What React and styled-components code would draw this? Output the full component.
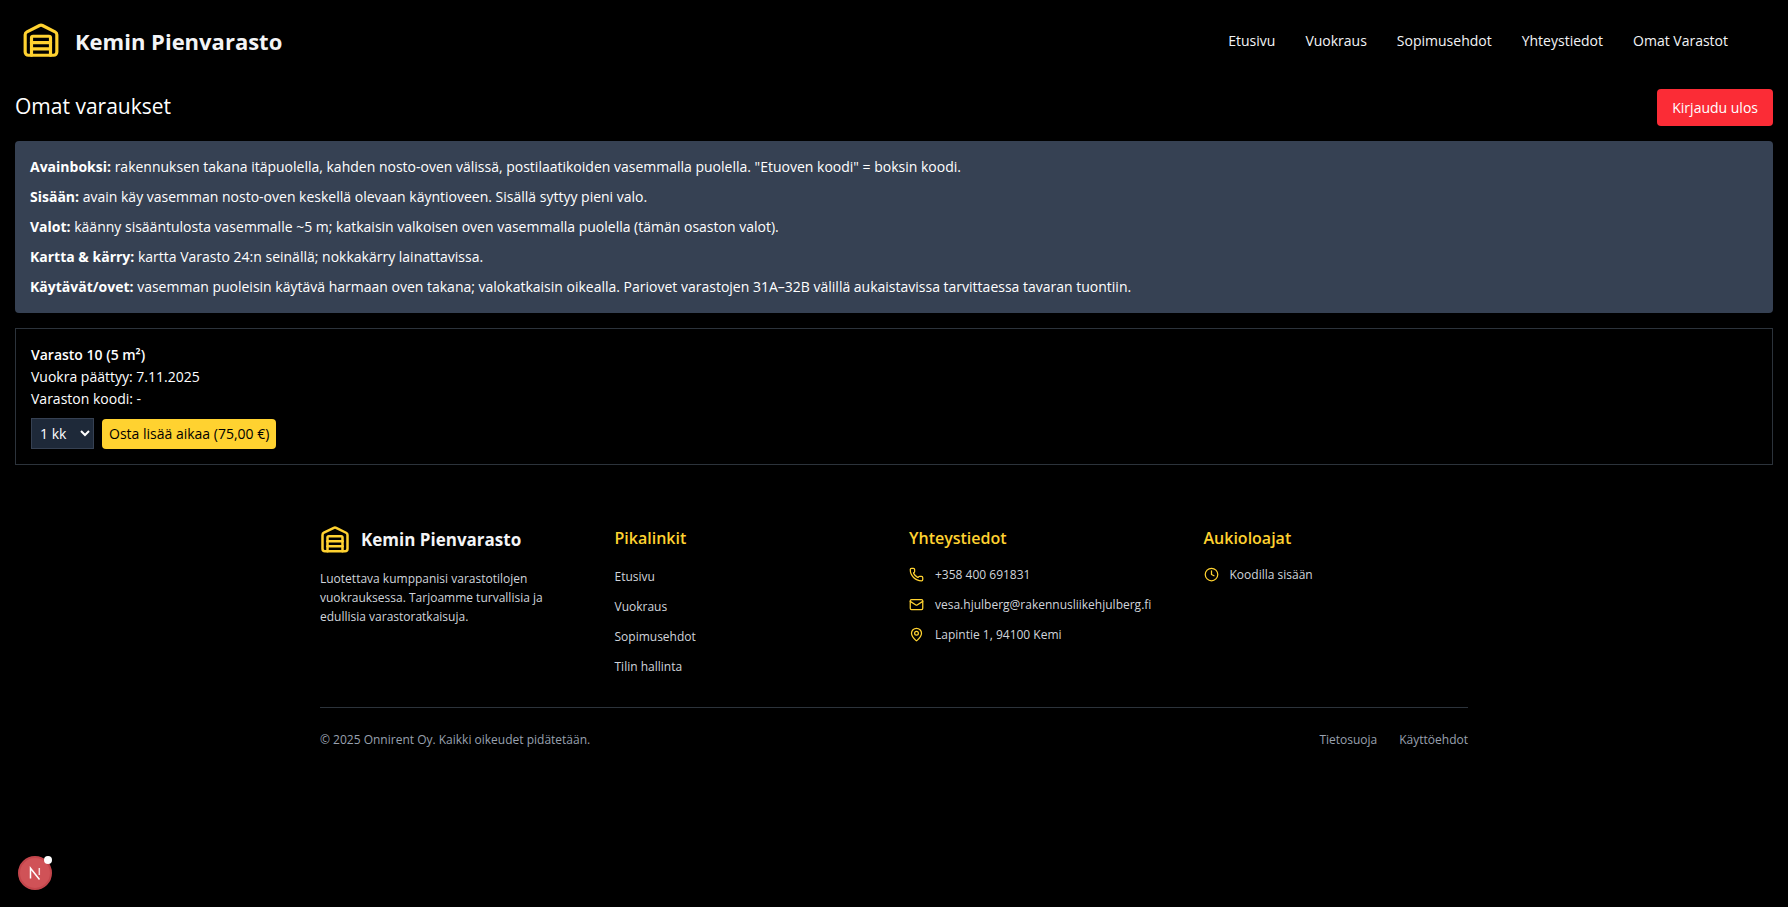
import React from "react";
import styled, { createGlobalStyle, ThemeProvider } from "styled-components";
import { Warehouse, Phone, Mail, MapPin, Clock } from "lucide-react";

const theme = {
  yellow: "#ffd230",
  red: "#fb2c36",
  panel: "#364153",
  field: "#1e2939",
  line: "#2c333b",
  textMuted: "#d1d5dc",
  textDim: "#99a1af",
};

const GlobalStyle = createGlobalStyle`
  *, *::before, *::after { box-sizing: border-box; }
  body {
    margin: 0;
    background: #000;
    color: #fff;
    font-family: "Open Sans", "Noto Sans", sans-serif;
    font-size: 14px;
    line-height: 22px;
  }
  h1, h2, h3, p, ul { margin: 0; padding: 0; }
  ul { list-style: none; }
  a { color: inherit; text-decoration: none; }
  button, select { font: inherit; }
`;

const Page = styled.div`
  min-height: 100vh;
`;

const Header = styled.header`
  display: flex;
  align-items: center;
  justify-content: space-between;
  height: 82px;
  padding: 0 60px 0 22px;
`;

const Brand = styled.a`
  display: flex;
  align-items: center;
  gap: ${(p) => (p.$small ? 11 : 15)}px;
  font-size: ${(p) => (p.$small ? 17 : 22)}px;
  line-height: 30px;
  font-weight: 700;
  color: #f3f4f6;
  white-space: nowrap;

  svg { color: ${(p) => p.theme.yellow}; flex: none; }
`;

const Nav = styled.nav`
  display: flex;
  gap: 30px;
`;

const NavLink = styled.a`
  color: #f3f4f6;
  white-space: nowrap;
`;

const Main = styled.main`
  display: flex;
  flex-direction: column;
  gap: 15px;
  padding: 7px 15px 0;
`;

const TitleRow = styled.div`
  display: flex;
  align-items: flex-start;
  justify-content: space-between;
`;

const Title = styled.h1`
  font-size: 21px;
  line-height: 34px;
  font-weight: 400;
`;

const LogoutButton = styled.button`
  min-height: 37px;
  padding: 7px 15px;
  border: 0;
  border-radius: 4px;
  background: ${(p) => p.theme.red};
  color: #fff;
`;

const InfoPanel = styled.section`
  display: flex;
  flex-direction: column;
  gap: 8px;
  padding: 15px;
  border-radius: 4px;
  background: ${(p) => p.theme.panel};
`;

const RentalCard = styled.section`
  padding: 15px;
  border: 1px solid ${(p) => p.theme.line};
`;

const RentalName = styled.h2`
  font-size: 14px;
  line-height: 22px;
  font-weight: 600;
`;

const ExtendForm = styled.form`
  display: flex;
  align-items: center;
  gap: 8px;
  margin-top: 8px;
`;

const MonthSelect = styled.select`
  width: 63px;
  height: 31px;
  padding: 0 4px;
  border: 1px solid ${(p) => p.theme.panel};
  border-radius: 0;
  background-color: ${(p) => p.theme.field};
  color: #fff;
`;

const BuyButton = styled.button`
  padding: 4px 7px;
  border: 0;
  border-radius: 4px;
  background: ${(p) => p.theme.yellow};
  color: #000;
`;

const Footer = styled.footer`
  max-width: 1208px;
  margin: 0 auto;
  padding: 60px 30px 32px;
  font-size: 12px;
  line-height: 19px;
  color: ${(p) => p.theme.textMuted};
`;

const FooterGrid = styled.div`
  display: grid;
  grid-template-columns: repeat(4, minmax(0, 1fr));
  gap: 30px;
`;

const Blurb = styled.p`
  margin-top: 14px;
`;

const ColumnTitle = styled.h3`
  margin-bottom: 14px;
  font-size: 16px;
  line-height: 26px;
  font-weight: 600;
  color: ${(p) => p.theme.yellow};
`;

const LinkList = styled.ul`
  display: flex;
  flex-direction: column;
  gap: 6px;

  li { line-height: 24px; }
`;

const ContactList = styled.ul`
  display: flex;
  flex-direction: column;
  gap: 11px;
`;

const ContactItem = styled.li`
  display: flex;
  align-items: center;
  gap: 11px;
  white-space: nowrap;

  svg { color: ${(p) => p.theme.yellow}; flex: none; }
`;

const FooterBottom = styled.div`
  display: flex;
  justify-content: space-between;
  margin-top: 28px;
  padding-top: 22px;
  border-top: 1px solid ${(p) => p.theme.line};
  color: ${(p) => p.theme.textDim};
`;

const LegalLinks = styled.nav`
  display: flex;
  gap: 22px;
`;

const DevBadge = styled.button`
  position: fixed;
  left: 18px;
  bottom: 17px;
  width: 34px;
  height: 34px;
  padding: 0;
  border: 2px solid #c3454b;
  border-radius: 50%;
  background: #d05257;

  svg { display: block; }
`;

const BadgeDot = styled.span`
  position: absolute;
  top: -2px;
  right: -2px;
  width: 8px;
  height: 8px;
  border-radius: 50%;
  background: #fff;
`;

const navItems = ["Etusivu", "Vuokraus", "Sopimusehdot", "Yhteystiedot", "Omat Varastot"];

const instructions = [
  ["Avainboksi:", 'rakennuksen takana itäpuolella, kahden nosto-oven välissä, postilaatikoiden vasemmalla puolella. "Etuoven koodi" = boksin koodi.'],
  ["Sisään:", "avain käy vasemman nosto-oven keskellä olevaan käyntioveen. Sisällä syttyy pieni valo."],
  ["Valot:", "käänny sisääntulosta vasemmalle ~5 m; katkaisin valkoisen oven vasemmalla puolella (tämän osaston valot)."],
  ["Kartta & kärry:", "kartta Varasto 24:n seinällä; nokkakärry lainattavissa."],
  ["Käytävät/ovet:", "vasemman puoleisin käytävä harmaan oven takana; valokatkaisin oikealla. Pariovet varastojen 31A–32B välillä aukaistavissa tarvittaessa tavaran tuontiin."],
];

const quickLinks = ["Etusivu", "Vuokraus", "Sopimusehdot", "Tilin hallinta"];

export default function App() {
  return (
    <ThemeProvider theme={theme}>
      <GlobalStyle />
      <Page>
        <Header>
          <Brand href="#">
            <Warehouse size={38} />
            Kemin Pienvarasto
          </Brand>
          <Nav>
            {navItems.map((item) => (
              <NavLink key={item} href="#">{item}</NavLink>
            ))}
          </Nav>
        </Header>

        <Main>
          <TitleRow>
            <Title>Omat varaukset</Title>
            <LogoutButton type="button">Kirjaudu ulos</LogoutButton>
          </TitleRow>

          <InfoPanel>
            {instructions.map(([label, text]) => (
              <p key={label}>
                <strong>{label}</strong> {text}
              </p>
            ))}
          </InfoPanel>

          <RentalCard>
            <RentalName>Varasto 10 (5 m²)</RentalName>
            <p>Vuokra päättyy: 7.11.2025</p>
            <p>Varaston koodi: -</p>
            <ExtendForm onSubmit={(e) => e.preventDefault()}>
              <MonthSelect aria-label="Lisäaika" defaultValue="1">
                <option value="1">1 kk</option>
                <option value="2">2 kk</option>
                <option value="3">3 kk</option>
              </MonthSelect>
              <BuyButton type="submit">Osta lisää aikaa (75,00 €)</BuyButton>
            </ExtendForm>
          </RentalCard>
        </Main>

        <Footer>
          <FooterGrid>
            <div>
              <Brand href="#" $small>
                <Warehouse size={30} />
                Kemin Pienvarasto
              </Brand>
              <Blurb>
                Luotettava kumppanisi varastotilojen vuokrauksessa. Tarjoamme turvallisia ja edullisia varastoratkaisuja.
              </Blurb>
            </div>
            <div>
              <ColumnTitle>Pikalinkit</ColumnTitle>
              <LinkList>
                {quickLinks.map((item) => (
                  <li key={item}><a href="#">{item}</a></li>
                ))}
              </LinkList>
            </div>
            <div>
              <ColumnTitle>Yhteystiedot</ColumnTitle>
              <ContactList>
                <ContactItem><Phone size={15} />+358 400 691831</ContactItem>
                <ContactItem><Mail size={15} />vesa.hjulberg@rakennusliikehjulberg.fi</ContactItem>
                <ContactItem><MapPin size={15} />Lapintie 1, 94100 Kemi</ContactItem>
              </ContactList>
            </div>
            <div>
              <ColumnTitle>Aukioloajat</ColumnTitle>
              <ContactList>
                <ContactItem><Clock size={15} />Koodilla sisään</ContactItem>
              </ContactList>
            </div>
          </FooterGrid>
          <FooterBottom>
            <p>© 2025 Onnirent Oy. Kaikki oikeudet pidätetään.</p>
            <LegalLinks>
              <a href="#">Tietosuoja</a>
              <a href="#">Käyttöehdot</a>
            </LegalLinks>
          </FooterBottom>
        </Footer>

        <DevBadge type="button" aria-label="Next.js">
          <svg width="30" height="30" viewBox="0 0 30 30" fill="none" stroke="#fff" strokeWidth="1.5">
            <path d="M10.5 20.5V10.2L19.5 21.5" />
            <path d="M19.3 10v7" strokeOpacity="0.8" />
          </svg>
          <BadgeDot />
        </DevBadge>
      </Page>
    </ThemeProvider>
  );
}
